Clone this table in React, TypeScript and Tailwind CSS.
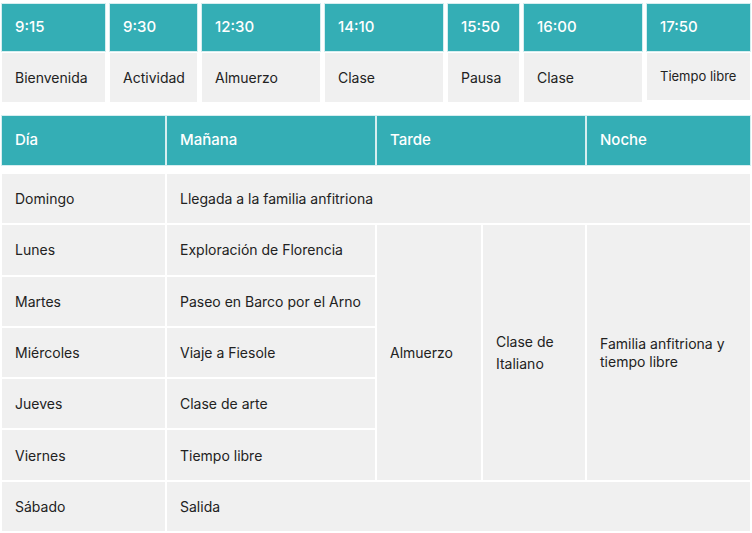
const TIMES: { time: string; label: string; w: string; small?: boolean }[] = [
  { time: "9:15", label: "Bienvenida", w: "w-[103px]" },
  { time: "9:30", label: "Actividad", w: "w-[87px]" },
  { time: "12:30", label: "Almuerzo", w: "w-[118px]" },
  { time: "14:10", label: "Clase", w: "w-[118px]" },
  { time: "15:50", label: "Pausa", w: "w-[71px]" },
  { time: "16:00", label: "Clase", w: "w-[118px]" },
  { time: "17:50", label: "Tiempo libre", w: "w-[103px]", small: true },
];

const WEEK = [
  { day: "Lunes", morning: "Exploración de Florencia" },
  { day: "Martes", morning: "Paseo en Barco por el Arno" },
  { day: "Miércoles", morning: "Viaje a Fiesole" },
  { day: "Jueves", morning: "Clase de arte" },
  { day: "Viernes", morning: "Tiempo libre" },
];

export default function App() {
  return (
    <div className="w-[752px] h-[533px] bg-white text-[#222] overflow-hidden" style={{ fontFamily: "Inter, 'Noto Sans', sans-serif" }}>
      {/* Timeline */}
      <div className="flex gap-[5px] pl-[2px] pt-[4px]">
        {TIMES.map((t) => (
          <div key={t.time} className={`${t.w} flex flex-col gap-[2px]`}>
            <div className="h-[47px] bg-[#34aeb5] ring-1 ring-[#d6eef0] flex items-center px-[13px] text-[15px] font-medium text-white">
              {t.time}
            </div>
            {t.small ? (
              <div className="h-[47px] bg-[#f0f0f0] flex items-center px-[13px] text-[13px]">{t.label}</div>
            ) : (
              <div className="h-[49px] bg-[#f0f0f0] flex items-center px-[13px] text-[14px]">{t.label}</div>
            )}
          </div>
        ))}
      </div>

      {/* Header */}
      <div className="grid grid-cols-[163px_208px_104px_102px_163px] gap-[2px] pl-[2px] mt-[14px]">
        <div className="h-[49px] bg-[#34aeb5] ring-1 ring-[#d6eef0] flex items-center px-[13px] text-[15px] font-medium text-white">Día</div>
        <div className="h-[49px] bg-[#34aeb5] ring-1 ring-[#d6eef0] flex items-center px-[13px] text-[15px] font-medium text-white">Mañana</div>
        <div className="col-span-2 h-[49px] bg-[#34aeb5] ring-1 ring-[#d6eef0] flex items-center px-[13px] text-[15px] font-medium text-white">Tarde</div>
        <div className="h-[49px] bg-[#34aeb5] ring-1 ring-[#d6eef0] flex items-center px-[13px] text-[15px] font-medium text-white">Noche</div>
      </div>

      {/* Body */}
      <div className="grid grid-cols-[163px_208px_104px_102px_163px] auto-rows-[49.3px] gap-[2px] pl-[2px] mt-[9px] text-[14px]">
        <div className="bg-[#f0f0f0] flex items-center px-[13px]">Domingo</div>
        <div className="col-span-4 bg-[#f0f0f0] flex items-center px-[13px]">Llegada a la familia anfitriona</div>

        {WEEK.map((r, i) => (
          <div key={r.day} className="contents">
            <div className="bg-[#f0f0f0] flex items-center px-[13px]">{r.day}</div>
            <div className="bg-[#f0f0f0] flex items-center px-[13px]">{r.morning}</div>
            {i === 0 && (
              <>
                <div className="row-span-5 bg-[#f0f0f0] flex items-center px-[13px]">Almuerzo</div>
                <div className="row-span-5 bg-[#f0f0f0] flex items-center px-[13px] leading-[22px]">Clase de<br />Italiano</div>
                <div className="row-span-5 bg-[#f0f0f0] flex items-center px-[13px] leading-[18px]">Familia anfitriona y tiempo libre</div>
              </>
            )}
          </div>
        ))}

        <div className="bg-[#f0f0f0] flex items-center px-[13px]">Sábado</div>
        <div className="col-span-4 bg-[#f0f0f0] flex items-center px-[13px]">Salida</div>
      </div>
    </div>
  );
}
